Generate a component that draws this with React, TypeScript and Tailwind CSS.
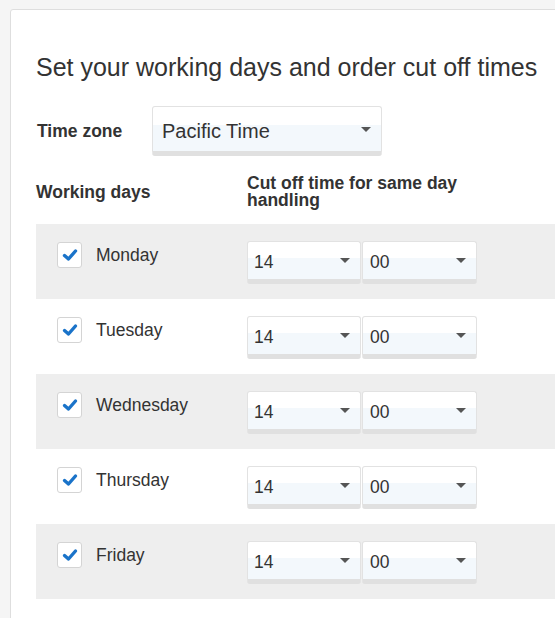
import React from "react";

function Arrow() {
  return (
    <svg width="10" height="5" viewBox="0 0 10 5" className="shrink-0">
      <path d="M0 0 L10 0 L5 5 Z" fill="#555" />
    </svg>
  );
}

function Select({ value, w, text, pl, pr, h }: { value: string; w: string; text: string; pl: string; pr: string; h: string }) {
  return (
    <div
      className={`${w} ${h} flex items-center justify-between rounded-[3px] border border-[#e2e2e2] border-b-[5px] border-b-[#e0e0e0] bg-[linear-gradient(to_bottom,#ffffff_42%,#f3f8fc_42%)] ${pl} ${pr} text-[#333] ${text}`}
    >
      <span className="pt-[3px]">{value}</span>
      <Arrow />
    </div>
  );
}

function Check() {
  return (
    <div className="w-[25px] h-[26px] rounded-[3px] border border-[#d4d4d4] bg-white flex items-center justify-center">
      <svg width="16" height="14" viewBox="0 0 16 14">
        <path d="M2.5 7.5 L6.5 11 L13.5 3" fill="none" stroke="#1a73c9" strokeWidth="3.4" strokeLinecap="round" strokeLinejoin="round" />
      </svg>
    </div>
  );
}

const days = ["Monday", "Tuesday", "Wednesday", "Thursday", "Friday"];

export default function App() {
  return (
    <div
      className="w-[555px] h-[618px] overflow-hidden bg-[#f5f5f5] pt-[9px] pl-[10px] text-[#333]"
      style={{ fontFamily: '"Liberation Sans", Arial, sans-serif' }}
    >
      <div className="w-[620px] h-[640px] bg-white border border-[#dedede] rounded-[3px] pl-[25px] pt-[42px]">
        <h1 className="text-[25px] leading-[30px] font-normal">Set your working days and order cut off times</h1>
        <div className="mt-[24px] flex items-center">
          <div className="w-[116px] text-[17.5px] font-bold pl-[1px]">Time zone</div>
          <Select value="Pacific Time" w="w-[230px]" h="h-[50px]" text="text-[20px]" pl="pl-[9px]" pr="pr-[10px]" />
        </div>
        <div className="mt-[19px] flex items-center">
          <div className="w-[211px] text-[17.5px] font-bold">Working days</div>
          <div className="w-[218px] text-[17.5px] leading-[17px] font-bold">Cut off time for same day handling</div>
        </div>
        <div className="mt-[15px]">
          {days.map((d, i) => (
            <div key={d} className={`h-[75px] flex ${i % 2 === 0 ? "bg-[#eeeeee]" : "bg-white"}`}>
              <div className="w-[211px] pl-[21px] pt-[18px] flex items-start gap-[14px]">
                <Check />
                <span className="text-[17.5px] leading-[26px]">{d}</span>
              </div>
              <div className="pt-[17px] flex gap-[1px]">
                <Select value="14" w="w-[114px]" h="h-[43px]" text="text-[17.5px]" pl="pl-[6px]" pr="pr-[10px]" />
                <Select value="00" w="w-[115px]" h="h-[43px]" text="text-[17.5px]" pl="pl-[7px]" pr="pr-[10px]" />
              </div>
            </div>
          ))}
        </div>
      </div>
    </div>
  );
}
